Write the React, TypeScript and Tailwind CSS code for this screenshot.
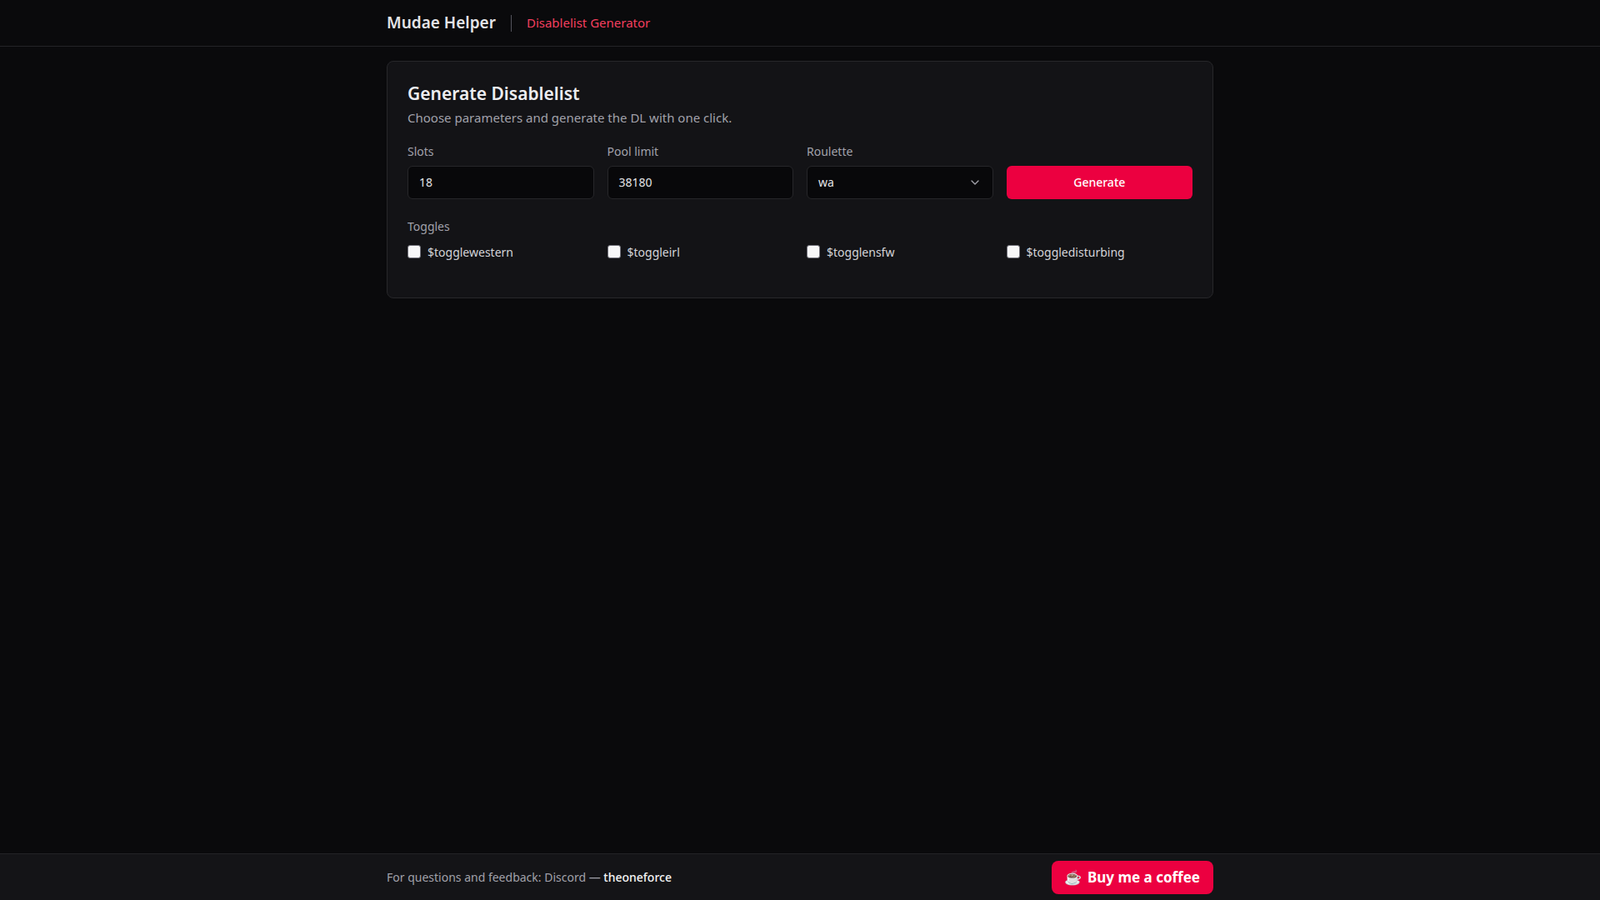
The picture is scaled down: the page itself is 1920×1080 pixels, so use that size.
import { ChevronDown } from "lucide-react";

const TOGGLES = ["$togglewestern", "$toggleirl", "$togglensfw", "$toggledisturbing"];

function Field({ label, value }: { label: string; value: string }) {
  return (
    <div className="flex flex-col gap-[7px]">
      <label className="text-[14px] text-[#a1a1aa]">{label}</label>
      <div className="flex h-10 items-center rounded-md border border-[#27272a] bg-[#08080a] px-[13px] text-[14px] text-[#e4e4e7]">
        {value}
      </div>
    </div>
  );
}

export default function App() {
  return (
    <div className="flex min-h-screen flex-col bg-[#0a0a0c] font-['Inter',sans-serif] text-[#e4e4e7]">
      <header className="h-[56px] border-b border-[#232327]">
        <div className="mx-auto flex h-full w-[992px] items-center">
          <span className="text-[19px] font-semibold text-[#e4e4e7]">Mudae Helper</span>
          <span className="mx-[18px] h-[20px] w-px bg-[#52525b]" />
          <span className="text-[15px] text-[#f43f5e]">Disablelist Generator</span>
        </div>
      </header>

      <main className="flex-1">
        <div className="mx-auto mt-[17px] w-[992px] rounded-lg border border-[#27272a] bg-[#131316] px-6 pb-[44px] pt-[24px]">
          <h1 className="text-[21px] font-semibold leading-7 text-[#ededf0]">Generate Disablelist</h1>
          <p className="mt-[4px] text-[15px] text-[#a1a1aa]">Choose parameters and generate the DL with one click.</p>

          <div className="mt-[18px] grid grid-cols-4 gap-4">
            <Field label="Slots" value="18" />
            <Field label="Pool limit" value="38180" />
            <div className="flex flex-col gap-[7px]">
              <label className="text-[14px] text-[#a1a1aa]">Roulette</label>
              <div className="flex h-10 items-center justify-between rounded-md border border-[#27272a] bg-[#08080a] px-[13px] text-[14px] text-[#e4e4e7]">
                wa
                <ChevronDown className="h-4 w-4 text-[#a1a1aa]" />
              </div>
            </div>
            <div className="flex flex-col justify-end">
              <button className="h-10 rounded-md bg-[#ec0040] text-[14px] font-medium text-white">Generate</button>
            </div>
          </div>

          <div className="mt-[22px] text-[14px] text-[#a1a1aa]">Toggles</div>
          <div className="mt-[10px] grid grid-cols-4 gap-4">
            {TOGGLES.map((t) => (
              <label key={t} className="flex items-center gap-[8px] text-[14px] text-[#d4d4d8]">
                <span className="h-4 w-4 rounded-[3px] border border-[#71717a] bg-[#f7f7f8]" />
                {t}
              </label>
            ))}
          </div>
        </div>
      </main>

      <footer className="h-[56px] border-t border-[#232327] bg-[#141417]">
        <div className="mx-auto flex h-full w-[992px] items-center justify-between">
          <span className="text-[14px] text-[#a1a1aa]">
            For questions and feedback: Discord — <span className="font-medium text-[#f4f4f5]">theoneforce</span>
          </span>
          <button className="flex h-10 items-center gap-1.5 rounded-lg bg-[#ec0040] px-4 font-['Liberation_Sans',sans-serif] text-[17px] font-bold text-white">
            <span className="text-[17px]">☕</span>Buy me a coffee
          </button>
        </div>
      </footer>
    </div>
  );
}
